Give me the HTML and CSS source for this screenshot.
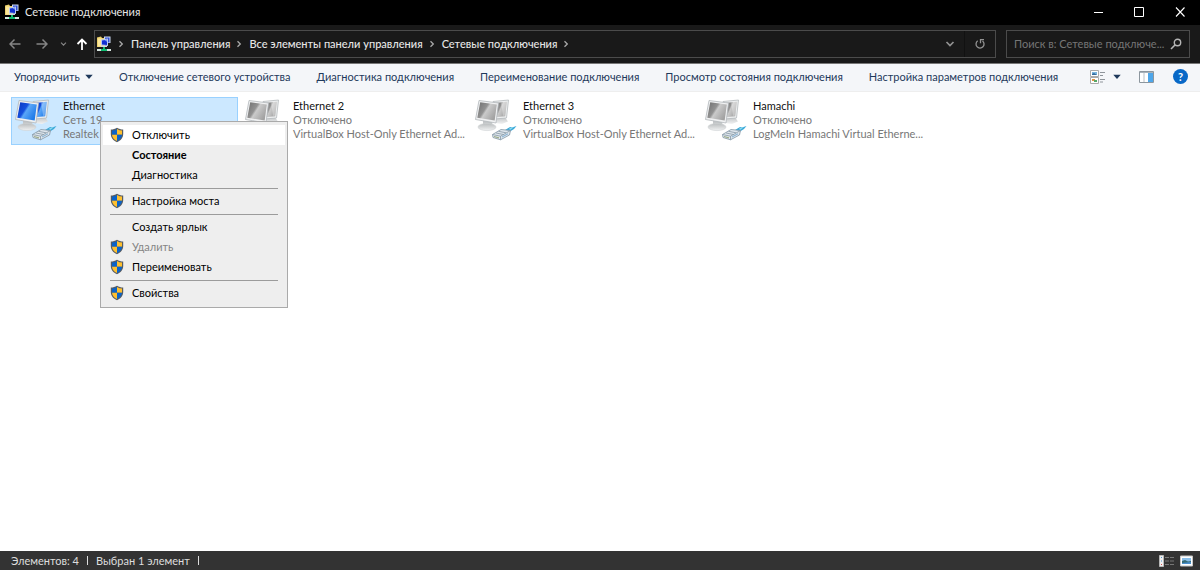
FILE: index.html
```html
<!DOCTYPE html>
<html lang="ru">
<head>
<meta charset="utf-8">
<meta name="viewport" content="width=device-width, initial-scale=1">
<title>Сетевые подключения</title>
<link rel="stylesheet" href="styles.css">
</head>
<body>
<svg class="defs" aria-hidden="true">
  <defs>
    <linearGradient id="blue-screen" x1="0" y1="0" x2="1" y2=".6">
      <stop offset="0" stop-color="#0a35c0"/><stop offset=".45" stop-color="#1450dd"/><stop offset=".55" stop-color="#5aa6f8"/><stop offset="1" stop-color="#1f7be8"/>
    </linearGradient>
    <linearGradient id="grey-screen" x1="0" y1="0" x2="1" y2=".6">
      <stop offset="0" stop-color="#6e6e6e"/><stop offset=".45" stop-color="#929292"/><stop offset=".55" stop-color="#cacaca"/><stop offset="1" stop-color="#a2a2a2"/>
    </linearGradient>
    <linearGradient id="stand" x1="0" y1="0" x2="0" y2="1">
      <stop offset="0" stop-color="#b9bcbe"/><stop offset="1" stop-color="#f1f2f3"/>
    </linearGradient>
    <symbol id="shield" viewBox="0 0 14 16">
      <path d="M7 .7C5.200 1.900 3 2.500 .8 2.500V7c0 3.800 2.500 6.500 6.200 8.300C10.700 13.500 13.200 10.800 13.200 7V2.500C11 2.500 8.800 1.900 7 .7z" fill="#565c63"/>
      <path d="M7 2C5.400 3 3.700 3.500 2 3.600V7.700H7z" fill="#0a63c9"/>
      <path d="M7 2C8.600 3 10.300 3.500 12 3.600V7.700H7z" fill="#ffc02e"/>
      <path d="M2 7.700c.2 2.900 2.100 4.900 5 6.300V7.700z" fill="#ffc02e"/>
      <path d="M12 7.700c-.2 2.900-2.100 4.900-5 6.300V7.700z" fill="#0a63c9"/>
    </symbol>
    <symbol id="plug" viewBox="0 0 26 16">
      <path d="M14 5l5-3 2 .5 4.500-1.500-2.500 3-4 2.500-3 .3z" fill="#3ba9d8"/>
      <path d="M18 3.500l5-1.500-4 3z" fill="#91dbf1"/>
      <path d="M1.500 9.500L10 4.500l9.500 1-1 4.500-9 4.800-7.500-2.300z" fill="#dfe6ec" stroke="#8395a5" stroke-width=".8"/>
      <path d="M1.500 9.500l8 1.700 10-5.700M9.500 11.200v3.600M5 8l7.500 1.500M7.500 6.300l7.500 1.500" fill="none" stroke="#8798a6" stroke-width=".8"/>
      <path d="M3 11l5 1.200v1.300l-5-1.400z" fill="#9cac88"/>
      <path d="M11 12l6-3.200" stroke="#8db4d4" stroke-width="1.200"/>
    </symbol>
    <symbol id="network-folder" viewBox="0 0 16 16">
      <path d="M1 1.500L5 .5l1 1.500h3V11H1z" fill="#ecd06c"/><path d="M2 2.500h4v8H2z" fill="#fae69b"/>
      <path d="M8 .5l6.500 0v6.500H8z" fill="#ccdaf2"/><path d="M9 1.500h4.500v5H9z" fill="#3250d3"/>
      <path d="M5 3.500l7-1V10l-7-.5z" fill="#b9c9f0"/><path d="M6 4.500l5-.7V9L6 8.500z" fill="#102fd1"/><path d="M8.500 4.200l2.500-.4v2z" fill="#779bf6"/>
      <path d="M5 10h6v1H5z" fill="#d5d8df"/>
      <path d="M7 11h2v2h2v2H5v-2h2z" fill="#0fba6f"/><path d="M1 13h4v2H1zM11 13h4v2h-4z" fill="#d7e5e0"/>
    </symbol>
    <symbol id="chevron" viewBox="0 0 6 8"><path d="M1.500 1.300L4.300 4 1.500 6.700" fill="none" stroke="currentColor" stroke-width="1.300"/></symbol>
    <symbol id="chevron-down" viewBox="0 0 10 8"><path d="M1.500 2L5 5.500 8.500 2" fill="none" stroke="currentColor" stroke-width="1.700"/></symbol>
    <symbol id="caret" viewBox="0 0 8 6"><path d="M.3 .8h7.400L4 5z" fill="currentColor"/></symbol>
    <symbol id="computers" viewBox="0 0 44 44">
      <path d="M20 18l9-1 4 5.500-6 2.500-7-1z" fill="url(#stand)"/>
      <path d="M18 2.500L33.500 1l-2 18-12 1z" fill="#edeff0" stroke="#b5babd" stroke-width=".8"/>
      <path d="M20 4l11.800-1.200-1.600 14.500L20 18.300z" fill="var(--screen)"/>
      <path d="M26 3.500l5.800-.7-1.600 14-2 .2z" fill="#fff" opacity=".3"/>
      <path d="M8 20h8l2 7H8z" fill="#c3c6c8"/>
      <ellipse cx="12" cy="28" rx="9" ry="3.600" fill="url(#stand)" stroke="#cfd2d4" stroke-width=".6"/>
      <path d="M4 1.500L23.500 4l-2.500 20L.5 20.500z" fill="#f0f1f2" stroke="#b2b7bb" stroke-width=".8"/>
      <path d="M5.200 3.300l16.600 2.200-2.100 16L2.300 18.800z" fill="var(--screen)"/>
      <use href="#plug" x="16" y="26" width="26" height="16"/>
    </symbol>
  </defs>
</svg>

<div class="window">
  <header class="titlebar">
    <svg class="app-icon"><use href="#network-folder"/></svg>
    <h1 class="title">Сетевые подключения</h1>
    <div class="window-buttons">
      <button class="window-button" aria-label="Свернуть"><svg viewBox="0 0 12 12"><path d="M2 6.500h9" stroke="#fff"/></svg></button>
      <button class="window-button" aria-label="Развернуть"><svg viewBox="0 0 12 12"><path d="M1.500 1.500h9v9h-9z" fill="none" stroke="#fff"/></svg></button>
      <button class="window-button" aria-label="Закрыть"><svg viewBox="0 0 12 12"><path d="M2 1.500l8.500 9M10.500 1.500L2 10.500" stroke="#fff" stroke-width="1.100"/></svg></button>
    </div>
  </header>

  <nav class="navbar" aria-label="Навигация">
    <div class="history">
      <button class="nav-button" aria-label="Назад"><svg class="arrow" viewBox="0 0 12 12"><path d="M11.500 6H1M5.500 1.500L1 6l4.500 4.500" fill="none" stroke="#858585" stroke-width="1.500"/></svg></button>
      <button class="nav-button" aria-label="Вперёд"><svg class="arrow" viewBox="0 0 12 12"><path d="M.5 6H11M6.500 1.500L11 6l-4.500 4.500" fill="none" stroke="#858585" stroke-width="1.500"/></svg></button>
      <button class="nav-button recent" aria-label="Последние расположения"><svg class="tiny-chevron"><use href="#chevron-down"/></svg></button>
      <button class="nav-button" aria-label="Вверх"><svg class="arrow" viewBox="0 0 12 12"><path d="M6 12V1.500M1.500 6L6 1.500 10.500 6" fill="none" stroke="#fff" stroke-width="1.800"/></svg></button>
    </div>
    <div class="address">
      <svg class="app-icon"><use href="#network-folder"/></svg>
      <svg class="chevron"><use href="#chevron"/></svg>
      <button class="crumb">Панель управления</button>
      <svg class="chevron"><use href="#chevron"/></svg>
      <button class="crumb">Все элементы панели управления</button>
      <svg class="chevron"><use href="#chevron"/></svg>
      <button class="crumb">Сетевые подключения</button>
      <svg class="chevron"><use href="#chevron"/></svg>
      <button class="address-button drop" aria-label="Предыдущие расположения"><svg class="down"><use href="#chevron-down"/></svg></button>
      <button class="address-button refresh" aria-label="Обновить"><svg class="arrow" viewBox="0 0 12 12"><path d="M8.300 2.800A4 4 0 1 1 3.500 2.900M2 1.700h3.500v3.500" fill="none" stroke="#929292" stroke-width="1.300" transform="matrix(-1 0 0 1 12 0)"/></svg></button>
    </div>
    <label class="search">
      <input class="search-input" type="text" aria-label="Поиск" placeholder="Поиск в: Сетевые подключе...">
      <svg class="arrow" viewBox="0 0 12 12"><circle cx="7.500" cy="4.500" r="3.200" fill="none" stroke="#b5b5b5" stroke-width="1.400"/><path d="M5.200 6.800L1 11" stroke="#b5b5b5" stroke-width="1.600"/></svg>
    </label>
  </nav>

  <div class="toolbar" role="toolbar" aria-label="Команды">
    <button class="command">Упорядочить <svg class="caret"><use href="#caret"/></svg></button>
    <button class="command">Отключение сетевого устройства</button>
    <button class="command">Диагностика подключения</button>
    <button class="command">Переименование подключения</button>
    <button class="command">Просмотр состояния подключения</button>
    <button class="command">Настройка параметров подключения</button>
    <div class="view-tools">
      <button class="view-button" aria-label="Изменить представление">
        <svg class="view-icon" viewBox="0 0 16 14"><path d="M.5 .5h8v6h-8zM.5 7.500h8v6h-8z" fill="#fff" stroke="#aaa"/><path d="M2 2h5v3H2z" fill="#79b5df"/><path d="M2 4l2-1 3 2H2z" fill="#346a9b"/><path d="M2 9h3v2H2z" fill="#e1913f"/><path d="M4 10h3v2H4z" fill="#58a868"/><path d="M10 2.500h5M10 5.500h3M10 9.500h5M10 12h3" stroke="#8e949a"/></svg>
        <svg class="caret"><use href="#caret"/></svg>
      </button>
      <button class="view-button" aria-label="Область просмотра"><svg class="view-icon" viewBox="0 0 16 14"><path d="M.5 1.500h14v11H.5z" fill="#fff" stroke="#8c969e"/><path d="M1 2h13v1H1z" fill="#a8b2ba"/><path d="M5 3v9" stroke="#b8bfc5"/><path d="M9 3h5v9H9z" fill="#4da6ea"/></svg></button>
      <button class="view-button" aria-label="Справка"><span class="help">?</span></button>
    </div>
  </div>

  <main class="content">
    <ul class="connections">
      <li class="connection selected">
        <svg class="computers"><use href="#computers"/></svg>
        <div class="details"><h2 class="name">Ethernet</h2><p class="info">Сеть 19</p><p class="info">Realtek</p></div>
      </li>
      <li class="connection">
        <svg class="computers"><use href="#computers"/></svg>
        <div class="details"><h2 class="name">Ethernet 2</h2><p class="info">Отключено</p><p class="info">VirtualBox Host-Only Ethernet Ad...</p></div>
      </li>
      <li class="connection">
        <svg class="computers"><use href="#computers"/></svg>
        <div class="details"><h2 class="name">Ethernet 3</h2><p class="info">Отключено</p><p class="info">VirtualBox Host-Only Ethernet Ad...</p></div>
      </li>
      <li class="connection">
        <svg class="computers"><use href="#computers"/></svg>
        <div class="details"><h2 class="name">Hamachi</h2><p class="info">Отключено</p><p class="info">LogMeIn Hamachi Virtual Etherne...</p></div>
      </li>
    </ul>

    <div class="menu" role="menu">
      <button class="menu-item active" role="menuitem"><svg class="shield"><use href="#shield"/></svg>Отключить</button>
      <button class="menu-item default" role="menuitem">Состояние</button>
      <button class="menu-item" role="menuitem">Диагностика</button>
      <hr class="separator">
      <button class="menu-item" role="menuitem"><svg class="shield"><use href="#shield"/></svg>Настройка моста</button>
      <hr class="separator">
      <button class="menu-item" role="menuitem">Создать ярлык</button>
      <button class="menu-item" role="menuitem" disabled><svg class="shield"><use href="#shield"/></svg>Удалить</button>
      <button class="menu-item" role="menuitem"><svg class="shield"><use href="#shield"/></svg>Переименовать</button>
      <hr class="separator">
      <button class="menu-item" role="menuitem"><svg class="shield"><use href="#shield"/></svg>Свойства</button>
    </div>
  </main>

  <footer class="statusbar">
    <span class="status">Элементов: 4</span>
    <span class="status">Выбран 1 элемент</span>
    <div class="modes">
      <button class="mode" aria-label="Таблица"><svg class="mode-icon" viewBox="0 0 16 12"><path d="M.5 .5h4v11h-4z" fill="#eee" stroke="#b7b7b7"/><path d="M2 2h1v1H2zM2 5.500h1v1H2z" fill="#4b94cf"/><path d="M2 9h1v1H2z" fill="#d64d45"/><path d="M6 2.500h4M11 2.500h4M6 6h4M11 6h4M6 9.500h4M11 9.500h4" stroke="#777"/></svg></button>
      <button class="mode" aria-label="Крупные значки"><svg class="mode-icon" viewBox="0 0 16 12"><path d="M1.500 1h12v10h-12z" fill="#fff" stroke="#c6c6c6"/><path d="M3 3h9v6H3z" fill="#8abfea"/><path d="M3 6l3-1 3 1.500L12 6v3H3z" fill="#356b75"/><path d="M3 8l9-1v2H3z" fill="#4a8fce"/></svg></button>
    </div>
  </footer>
</div>
</body>
</html>
```
FILE: styles.css
```css
* {
  box-sizing: border-box;
}

body {
  margin: 0;
  background: #fff;
  color: #111;
  font: 11px/15px Lato, "Noto Sans", sans-serif;
}

button,
input {
  border: 0;
  padding: 0;
  background: none;
  color: inherit;
  font: inherit;
}

svg {
  display: block;
  flex: none;
}

h1,
h2,
p,
ul {
  margin: 0;
  padding: 0;
  font: inherit;
  list-style: none;
}

.defs {
  position: absolute;
  width: 0;
  height: 0;
}

.window {
  display: flex;
  flex-direction: column;
  min-height: 100vh;
}

.titlebar {
  display: flex;
  align-items: center;
  gap: 5px;
  height: 25px;
  padding-bottom: 2px;
  padding-left: 4px;
  background: #000;
  color: #e8e8e8;
}

.app-icon {
  width: 16px;
  height: 16px;
}

.window-buttons {
  display: flex;
  margin-left: auto;
}

.window-button {
  display: grid;
  place-items: center;
  width: 41px;
  height: 22px;
}

.window-button svg,
.arrow {
  width: 12px;
  height: 12px;
}

.navbar {
  display: flex;
  align-items: center;
  height: 39px;
  padding-right: 10px;
  border-bottom: 1px solid #777;
  background: #191919;
}

.history {
  display: flex;
  align-items: center;
  width: 94px;
  padding-left: 9px;
  gap: 15px;
}

.nav-button {
  display: block;
}

.recent {
  color: #858585;
  margin-right: -6px;
  margin-left: -3px;
}

.tiny-chevron {
  width: 7px;
  height: 6px;
}

.address {
  display: flex;
  flex: 1;
  align-items: center;
  height: 28px;
  padding-left: 1px;
  border: 1px solid #4b4b4b;
  color: #e6e6e6;
}

.chevron {
  width: 6px;
  height: 8px;
  margin: 0 7px 0 6px;
  color: #aaa;
}

.crumb {
  padding-bottom: 2px;
  font-weight: 500;
}

.address-button {
  display: grid;
  place-items: center;
  width: 28px;
  height: 26px;
  color: #929292;
}

.drop {
  margin-left: auto;
}

.refresh {
  width: 31px;
  border-left: 1px solid #111;
}

.down {
  width: 10px;
  height: 8px;
}

.search {
  display: flex;
  align-items: center;
  width: 184px;
  height: 28px;
  margin-left: 10px;
  padding: 0 7px;
  border: 1px solid #4b4b4b;
}

.search-input {
  flex: 1;
  min-width: 0;
  padding-bottom: 2px;
  outline: 0;
  color: #ddd;
}

.search-input::placeholder {
  color: #767676;
  opacity: 1;
}

.toolbar {
  display: flex;
  align-items: center;
  gap: 26px;
  height: 28px;
  padding: 0 12px 2px 14px;
  border-bottom: 1px solid #eee;
  background: #f4f6f9;
  color: #1e395b;
}

.command {
  display: flex;
  align-items: center;
  gap: 5px;
  white-space: nowrap;
}

.caret {
  width: 8px;
  height: 6px;
}

.view-tools {
  display: flex;
  align-items: center;
  gap: 18px;
  margin-left: auto;
}

.view-button {
  display: flex;
  align-items: center;
  gap: 7px;
}

.view-icon {
  width: 16px;
  height: 14px;
}

.help {
  width: 15px;
  height: 15px;
  border-radius: 50%;
  background: #0868c7;
  color: #fff;
  font-weight: 700;
}

.content {
  position: relative;
  flex: 1;
  padding: 5px 11px;
}

.connections {
  display: grid;
  grid-template-columns: repeat(auto-fill, 227px);
  gap: 3px;
}

.connection {
  --screen: url(#grey-screen);
  display: flex;
  height: 48px;
  padding: 1px 1px 1px 3px;
  border: 1px solid transparent;
}

.selected {
  --screen: url(#blue-screen);
  border-color: #99d1ff;
  background: #cce8ff;
}

.computers {
  width: 44px;
  height: 44px;
}

.details {
  min-width: 0;
  padding-left: 4px;
}

.name,
.info {
  line-height: 14px;
  white-space: nowrap;
}

.info {
  color: #777;
}

.menu {
  position: absolute;
  top: 29px;
  left: 100px;
  width: 188px;
  padding: 3px 2px 4px;
  border: 1px solid #aaa;
  background: #eee;
  color: #000;
}

.menu-item {
  display: flex;
  position: relative;
  align-items: center;
  width: 100%;
  height: 20px;
  padding-bottom: 1px;
  padding-left: 29px;
}

.menu-item:disabled {
  color: #858585;
}

.active {
  background: #fff;
}

.default {
  font-weight: 700;
}

.shield {
  position: absolute;
  top: 2px;
  left: 7px;
  width: 14px;
  height: 16px;
}

.separator {
  height: 1px;
  margin: 3px 7px 2px;
  border: 0;
  background: #9b9b9b;
}

.statusbar {
  display: flex;
  align-items: center;
  height: 19px;
  padding: 0 5px 0 11px;
  background: #333;
  color: #ddd;
}

.status {
  display: flex;
  align-items: center;
  padding-right: 8px;
}

.status::after {
  width: 1px;
  height: 9px;
  margin-left: 8px;
  background: #ddd;
  content: "";
}

.modes {
  display: flex;
  gap: 4px;
  margin-left: auto;
}

.mode-icon {
  width: 16px;
  height: 12px;
}
```
